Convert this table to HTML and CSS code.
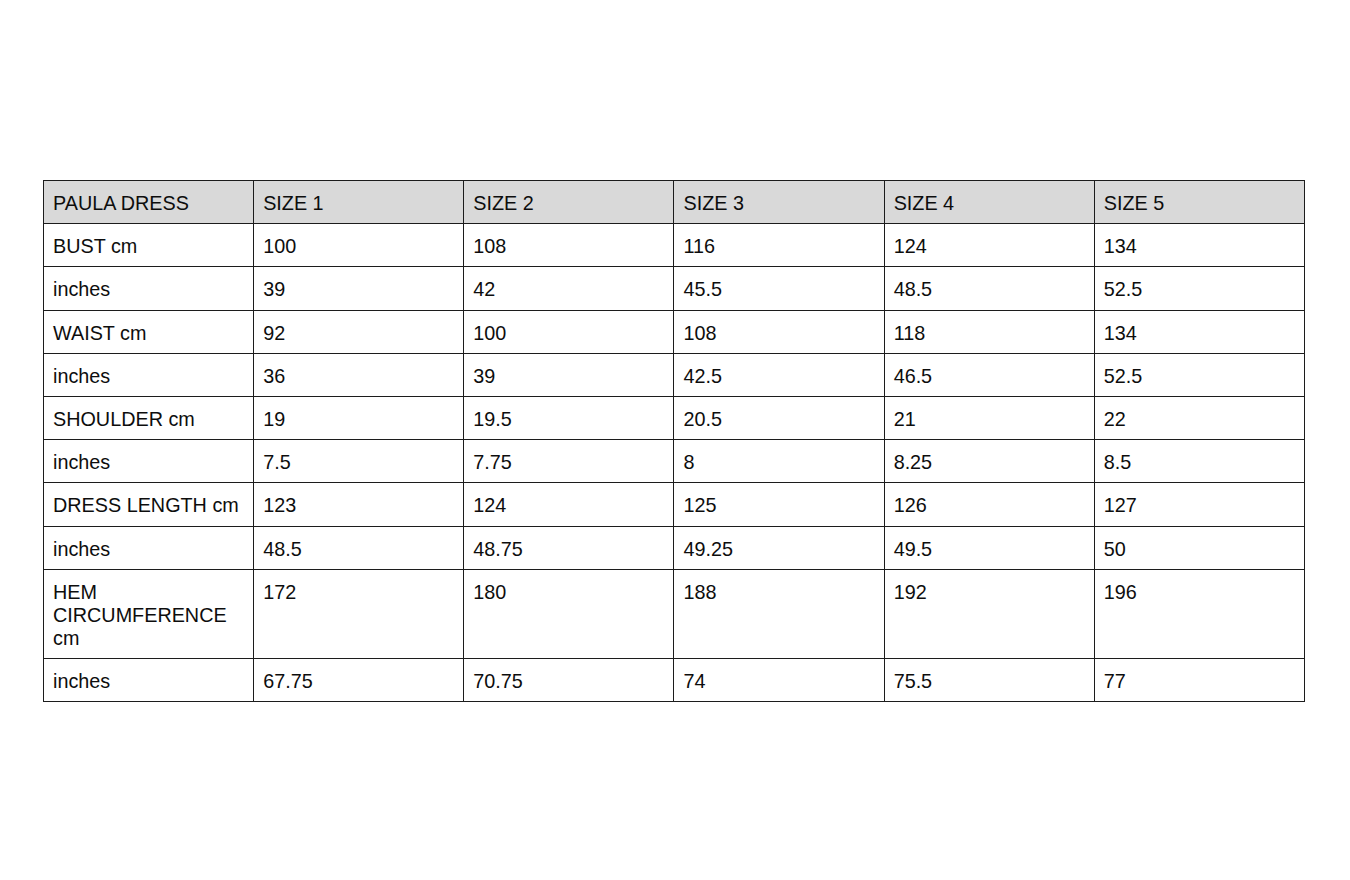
FILE: index.html
```html
<!DOCTYPE html>
<html>
<head>
<meta charset="utf-8">
<link rel="stylesheet" href="styles.css">
</head>
<body>
<main class="page">
<table class="sizes">
<thead>
<tr><th>PAULA DRESS</th><th>SIZE 1</th><th>SIZE 2</th><th>SIZE 3</th><th>SIZE 4</th><th>SIZE 5</th></tr>
</thead>
<tbody>
<tr><td>BUST cm</td><td>100</td><td>108</td><td>116</td><td>124</td><td>134</td></tr>
<tr><td>inches</td><td>39</td><td>42</td><td>45.5</td><td>48.5</td><td>52.5</td></tr>
<tr><td>WAIST cm</td><td>92</td><td>100</td><td>108</td><td>118</td><td>134</td></tr>
<tr><td>inches</td><td>36</td><td>39</td><td>42.5</td><td>46.5</td><td>52.5</td></tr>
<tr><td>SHOULDER cm</td><td>19</td><td>19.5</td><td>20.5</td><td>21</td><td>22</td></tr>
<tr><td>inches</td><td>7.5</td><td>7.75</td><td>8</td><td>8.25</td><td>8.5</td></tr>
<tr><td>DRESS LENGTH cm</td><td>123</td><td>124</td><td>125</td><td>126</td><td>127</td></tr>
<tr><td>inches</td><td>48.5</td><td>48.75</td><td>49.25</td><td>49.5</td><td>50</td></tr>
<tr><td>HEM CIRCUMFERENCE cm</td><td>172</td><td>180</td><td>188</td><td>192</td><td>196</td></tr>
<tr><td>inches</td><td>67.75</td><td>70.75</td><td>74</td><td>75.5</td><td>77</td></tr>
</tbody>
</table>
</main>
</body>
</html>
```
FILE: styles.css
```css
html, body {
  margin: 0;
  padding: 0;
  background: #ffffff;
}
.page {
  padding: 180px 0 0 43px;
}
.sizes {
  border-collapse: collapse;
  table-layout: fixed;
  width: 1262px;
  font-family: "Liberation Sans", Arial, sans-serif;
  font-size: 19.8px;
  line-height: 23px;
  color: #0d0d0d;
}
.sizes th,
.sizes td {
  border: 1px solid #1c1c1c;
  padding: 11px 9px 8.2px 9px;
  text-align: left;
  vertical-align: top;
  font-weight: normal;
}
.sizes th {
  background: #d9d9d9;
}
```
